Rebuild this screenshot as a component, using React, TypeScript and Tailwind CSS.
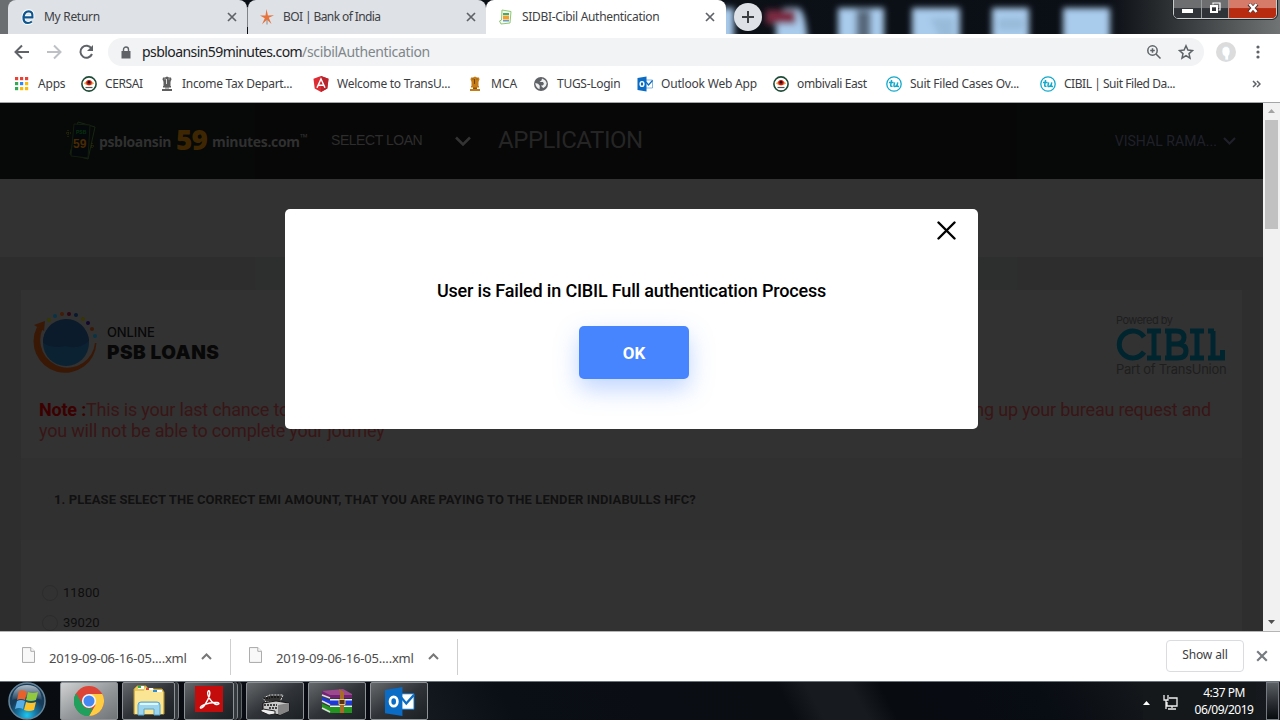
import React from "react";

const ui = "font-['Noto_Sans',sans-serif]";

function Emblem({ color, dark }: { color: string; dark: string }) {
  return (
    <svg width="16" height="16" viewBox="0 0 16 16">
      <path d="M4 1.5h2l2-1 2 1h2l.5 2-1 2h-7l-1-2z" fill={color} />
      <path d="M4.5 5h7v5h-7zM4 10h8v1.5H4zM3 13h10v2H3zM6 11h4v3H6z" fill={color} />
      <path d="M5.5 3h1M9.5 3h1M7.5 3v5M6 12.2h4" stroke={dark} strokeWidth="1" />
    </svg>
  );
}

function Eye() {
  return (
    <svg width="16" height="16" viewBox="0 0 16 16">
      <circle cx="8" cy="8" r="7.1" fill="#fff" stroke="#1d4a35" strokeWidth="1.6" />
      <path d="M2.8 7.2Q8 1.8 13.2 7.2 8 12 2.8 7.2z" fill="#f3a04a" />
      <circle cx="8" cy="6.6" r="2.7" fill="#c91818" />
      <circle cx="8" cy="6.2" r="1.2" fill="#111" />
      <path d="M4.5 11.5h7" stroke="#555" strokeWidth="1.2" />
    </svg>
  );
}

function Tu() {
  return (
    <svg width="16" height="16" viewBox="0 0 16 16" fill="none" stroke="#13a9cb">
      <circle cx="8" cy="8" r="7.2" strokeWidth="1.3" />
      <path d="M3 6.5h4.5M5.6 4 4.7 9.2q-.2 1.6 1.8 1M8.6 6.3l-.6 3q-.2 1.6 1.2 1.2 1.2-.3 1.9-1.6M11.7 6.3l-.6 3.2q0 1.3 1.9.7" strokeWidth="1.5" />
    </svg>
  );
}

function Angular() {
  return (
    <svg width="16" height="16" viewBox="0 0 16 16">
      <path d="M8 0l7.5 2.7-1.2 9.8L8 16l-6.3-3.5L.5 2.7z" fill="#dd2c33" />
      <path d="M8 0l7.5 2.7-1.2 9.8L8 16z" fill="#b8252d" />
      <path d="M4 11.7L8 3l4 8.7M5.5 9.3h5" stroke="#fff" strokeWidth="1.5" fill="none" />
    </svg>
  );
}

function GlobeIcon() {
  return (
    <svg width="16" height="16" viewBox="0 0 16 16">
      <circle cx="8" cy="8" r="7" fill="#5f6368" />
      <path d="M2.300 7l2.700.8 1.800 2-.3 3.400Q2.500 11.500 2.300 7zM9 2.500l-.5 2-2 1.500h3.500l1 2-1.500 1.500H8l1 1.500 1.500 1q3-1.500 3.200-4.500-.4-3.500-4.700-5z" fill="#fff" opacity=".9" />
    </svg>
  );
}

function Outlook({ size }: { size: number }) {
  return (
    <svg width={size} height={size} viewBox="0 0 32 32">
      <path d="M17 8h14v16H17z" fill="#fff" stroke="#0a6cc4" strokeWidth="1" />
      <path d="M18 12l5 6 8-9" fill="none" stroke="#0a6cc4" strokeWidth="2.4" />
      <path d="M1 4l18-3v30L1 28z" fill="#0a6cc4" />
      <ellipse cx="10" cy="16" rx="3.8" ry="4.8" fill="none" stroke="#fff" strokeWidth="2.8" />
    </svg>
  );
}

function AppsGrid() {
  const c = ["#ea4335", "#ea4335", "#ea4335", "#34a853", "#2b8af7", "#fbbc05", "#34a853", "#fbbc05", "#fbbc05"];
  return (
    <svg width="16" height="16" viewBox="0 0 16 16">
      {c.map((f, i) => (
        <rect key={i} x={1 + (i % 3) * 5} y={1 + Math.floor(i / 3) * 5} width="3.2" height="3.2" fill={f} />
      ))}
    </svg>
  );
}

function Cross({ size = 10, color = "#5f6368", w = 1.7 }: { size?: number; color?: string; w?: number }) {
  return (
    <svg width={size} height={size} viewBox="0 0 10 10" className="shrink-0">
      <path d="M1 1l8 8M9 1l-8 8" stroke={color} strokeWidth={w} />
    </svg>
  );
}

function Bookmark({ icon, label, className }: { icon: React.ReactNode; label: string; className: string }) {
  return (
    <div className={"flex shrink-0 items-center " + className}>
      <div className="w-4 shrink-0">{icon}</div>
      <span className="whitespace-nowrap">{label}</span>
    </div>
  );
}

function TabStrip() {
  return (
    <div className="relative flex h-[34px] shrink-0 bg-[#090d14] text-[12px] text-[#3c4043]">
      <svg className="absolute inset-0" width="1280" height="34">
        <defs>
          <linearGradient id="glass" x1="0" x2="1">
            <stop offset="0" stopColor="#0c1118" />
            <stop offset=".7" stopColor="#0a0e15" />
            <stop offset=".78" stopColor="#23272a" />
            <stop offset="1" stopColor="#707474" />
          </linearGradient>
          <filter id="soft" x="-20%" width="140%" y="-40%" height="180%"><feGaussianBlur stdDeviation="3.2" /></filter>
        </defs>
        <rect width="1280" height="34" fill="#0a0e15" />
        <rect width="30" height="34" fill="#6b6e70" />
        <rect x="700" width="580" height="34" fill="url(#glass)" />
        <g filter="url(#soft)" fill="#a9cbec">
          <rect x="720" y="8" width="14" height="40" />
          <path d="M776 48V24h8V8h14q8 2 10 40z" />
          <rect x="838" y="8" width="46" height="40" />
          <rect x="856" y="10" width="15" height="40" fill="#56687a" />
          <rect x="912" y="8" width="48" height="40" />
          <rect x="992" y="8" width="37" height="40" />
          <rect x="1063" y="8" width="47" height="40" />
          <path d="M930 18h24v20h-14zM998 18h26v12h-26z" fill="#8eb0cf" opacity=".6" />
          <rect x="766" y="10" width="30" height="14" fill="#7b2942" />
        </g>
      </svg>
      <div className="relative ml-2 flex h-full w-[239px] items-center rounded-t-lg bg-[#dee1e6] pl-3 pr-2.5">
        <svg width="16" height="16" viewBox="0 0 16 16" fill="none">
          <path d="M3.300 8.300h9.100q.7-6-3.700-6-4.500 0-5.200 5.700-.4 6 4.500 6 2 0 3.900-1.500" stroke="#fff" strokeWidth="4" />
          <path d="M3.300 8.300h9.100q.7-6-3.700-6-4.500 0-5.200 5.700-.4 6 4.500 6 2 0 3.900-1.500" stroke="#0e568f" strokeWidth="2.200" />
        </svg>
        <span className="ml-2 flex-1 tracking-[-0.3px]">My Return</span>
        <Cross />
      </div>
      <div className="relative z-10 mt-[7px] h-5 w-px bg-[#808488]" />
      <div className="relative flex h-full w-[238px] items-center rounded-t-lg bg-[#dee1e6] pl-[11px] pr-2.5">
        <svg width="16" height="16" viewBox="0 0 16 16" fill="#e5733b">
          <path d="M7.500 0l1.400 6.500L15 6.200 9.800 8.800 12.500 15 8 10.800 3 15.300 5.800 9.200 1 6.400l5.500.2z" />
          <path d="M8 11v4.500" stroke="#777" strokeWidth=".8" />
        </svg>
        <span className="ml-2 flex-1 tracking-[-0.6px]">BOI | Bank of India</span>
        <Cross />
      </div>
      <div className="relative flex h-full w-60 items-center rounded-t-lg bg-white pl-3 pr-[11px]">
        <svg width="16" height="16" viewBox="0 0 16 16" fill="none">
          <path d="M4 1l9 1.500-1 11.500-9 1L1.500 12l2-1z" fill="#f7fbf2" stroke="#8cc873" />
          <path d="M5 4h6v2H5z" fill="#42ac69" /><path d="M5 6.500h6v4H5z" fill="#f0a030" /><path d="M5 11h6v1.500H5z" fill="#6a9acb" />
        </svg>
        <span className="ml-2 flex-1 whitespace-nowrap tracking-[-0.32px]">SIDBI-Cibil Authentication</span>
        <Cross />
      </div>
      <div className="relative ml-2 mt-[3px] flex h-7 w-7 items-center justify-center rounded-full bg-[#dee1e6]">
        <svg width="12" height="12" viewBox="0 0 12 12"><path d="M6 0v12M0 6h12" stroke="#3c4043" strokeWidth="2" /></svg>
      </div>
      <div className="absolute right-[3px] top-[-4px] flex h-[23px] w-[104px] overflow-hidden rounded-b-[5px] border border-[#c9cbcc] outline outline-[#25282b]">
        <div className="flex w-7 items-end justify-center border-r border-[#9a9da0] bg-linear-to-b from-[#6c6e70] from-50% to-[#303337] to-55% pb-[5px]">
          <div className="h-[4px] w-[11px] bg-white" />
        </div>
        <div className="flex w-[27px] items-end justify-center border-r border-[#9a9da0] bg-linear-to-b from-[#6c6e70] from-50% to-[#303337] to-55% pb-1">
          <svg width="12" height="12" viewBox="0 0 12 12" fill="none"><path d="M4 2.500V1h7v7H9.500" stroke="#fff" strokeWidth="1.200" /><path d="M2 4h6v6H2z" stroke="#fff" strokeWidth="2" /></svg>
        </div>
        <div className="flex flex-1 items-end justify-center bg-linear-to-b from-[#d67b6a] from-50% to-[#b92b10] to-55% pb-[5px]">
          <svg width="12" height="10" viewBox="0 0 12 10"><path d="M2 1l8 8M10 1L2 9" stroke="#533" strokeWidth="4" /><path d="M2.500 1l7 8M9.500 1l-7 8" stroke="#fff" strokeWidth="2.500" /></svg>
        </div>
      </div>
    </div>
  );
}

function Toolbar() {
  return (
    <div className="flex h-9 shrink-0 items-center bg-white">
      <svg className="ml-3.5" width="84" height="20" viewBox="0 0 84 20" fill="none" stroke="#5f6368" strokeWidth="2">
        <path d="M15 10H2M8 3.500L1.500 10 8 16.500" />
        <path d="M33 10h13M40 3.500L46.500 10 40 16.500" stroke="#bdc1c6" />
        <path d="M77.500 6.500A6 6 0 1 0 78 12" />
        <path d="M79 3v6h-6z" fill="#5f6368" stroke="none" />
      </svg>
      <div className="ml-2.5 flex h-7 w-[1096px] items-center rounded-full bg-[#f1f3f4] pl-[13px] text-[14px]">
        <svg width="10" height="13" viewBox="0 0 10 13"><path d="M.5 5h9v7.500h-9z" fill="#5f6368" /><path d="M2.500 5V3.500a2.500 2.500 0 0 1 5 0V5" fill="none" stroke="#5f6368" strokeWidth="1.400" /></svg>
        <span className="-mt-px ml-[11px] flex-1 text-[#202124] tracking-[-0.57px]">psbloansin59minutes.com<span className="text-[#80868b] tracking-[-0.34px]">/scibilAuthentication</span></span>
        <svg width="16" height="16" viewBox="0 0 16 16" fill="none" stroke="#5f6368" strokeWidth="1.500"><circle cx="6.500" cy="6.500" r="4.700" /><path d="M10 10l4.500 4.500M4.200 6.500h4.600M6.500 4.200v4.600" /></svg>
        <svg className="ml-4 mr-2.5" width="16" height="16" viewBox="0 0 16 16" fill="none" stroke="#5f6368" strokeWidth="1.500"><path d="M8 1.800l1.900 4.300 4.600.4-3.500 3.100 1 4.600-4-2.500-4 2.500 1-4.600-3.500-3.100 4.600-.4z" /></svg>
      </div>
      <svg className="ml-3" width="20" height="20" viewBox="0 0 20 20"><circle cx="10" cy="10" r="10" fill="#dcdcdc" /><path d="M10 4.500c3 0 4 2.500 4 5 0 3-1 3.500-1.500 4.500v4H9v-3.500c-2-1-3-2.500-3-5s1-5 4-5z" fill="#fff" stroke="#cfe0ec" strokeWidth=".7" /></svg>
      <svg className="ml-5" width="4" height="14" viewBox="0 0 4 14" fill="#5f6368"><circle cx="2" cy="2" r="1.600" /><circle cx="2" cy="7" r="1.600" /><circle cx="2" cy="12" r="1.600" /></svg>
    </div>
  );
}

function Bookmarks() {
  return (
    <div className="flex h-[33px] shrink-0 items-center border-b border-[#a3a5a7] bg-white pb-1 pl-3.5 text-[12px] text-[#3c4043]">
      <Bookmark className="w-[67px] gap-2 tracking-[-0.2px]" icon={<AppsGrid />} label="Apps" />
      <Bookmark className="w-[78px] gap-2 tracking-[-0.4px]" icon={<Eye />} label="CERSAI" />
      <Bookmark className="w-[154px] gap-[7px] tracking-[-0.3px]" icon={<Emblem color="#5e5e5e" dark="#ddd" />} label="Income Tax Depart..." />
      <Bookmark className="w-[154px] gap-2 tracking-[-0.27px]" icon={<Angular />} label="Welcome to TransU..." />
      <Bookmark className="w-[66px] gap-2" icon={<Emblem color="#c57c14" dark="#704509" />} label="MCA" />
      <Bookmark className="w-[104px] gap-2 tracking-[-0.28px]" icon={<GlobeIcon />} label="TUGS-Login" />
      <Bookmark className="w-[136px] gap-2 tracking-[-0.2px]" icon={<Outlook size={16} />} label="Outlook Web App" />
      <Bookmark className="w-[113px] gap-2 tracking-[-0.38px]" icon={<Eye />} label="ombivali East" />
      <Bookmark className="w-[154px] gap-2 tracking-[-0.25px]" icon={<Tu />} label="Suit Filed Cases Ov..." />
      <Bookmark className="flex-1 gap-2 tracking-[-0.46px]" icon={<Tu />} label="CIBIL | Suit Filed Da..." />
      <svg className="mr-[19px]" width="9" height="8" viewBox="0 0 9 8" fill="none" stroke="#5f6368" strokeWidth="1.500"><path d="M1 1l3 3-3 3M5 1l3 3-3 3" /></svg>
    </div>
  );
}

function SiteHeader() {
  return (
    <div className="flex h-[76px] shrink-0 items-center bg-[linear-gradient(90deg,#060908_255px,#070707_255px,#070707_1017px,#060908_1017px)] pl-16 font-['Roboto',sans-serif]">
      <svg width="34" height="40" viewBox="0 0 34 40" fill="none">
        <path d="M14 1l17 5-7 32-18-5z" stroke="#172611" /><path d="M10 3l16 1-2 33-17-2z" fill="#05080a" stroke="#131d0e" />
        <path d="M4 9v8M2 12h5M28 22v6M27 25h4" stroke="#303207" strokeDasharray="1 1" />
        <text x="12" y="13" fontSize="5" fontWeight="700" fill="#06330f" fontFamily="Liberation Sans">PSB</text>
        <text x="9" y="27" fontSize="12" fontWeight="700" fill="#4a2a04" fontFamily="Liberation Sans">59</text>
      </svg>
      <div className="ml-[1px] flex items-center whitespace-nowrap font-['Open_Sans',sans-serif] font-bold text-[#303030]">
        <span className="w-[77px] text-[14px] tracking-[-0.35px]">psbloansin</span>
        <span className="-mt-[5px] w-9 text-[28px] font-extrabold leading-9 tracking-[-0.8px] text-[#3f2603]">59</span>
        <span className="w-[88px] text-[14px] tracking-[-0.33px]">minutes.com</span>
        <span className="-mt-2 w-[9px] text-[10px] leading-3">™</span>
      </div>
      <div className="ml-[22px] flex w-[141px] items-center justify-between">
        <span className="-mt-px font-['Liberation_Sans',sans-serif] text-[14px] tracking-[-0.45px] text-[#2d2d2d]">SELECT LOAN</span>
        <svg width="18" height="10" viewBox="0 0 18 10"><path d="M2 1.500l7 7 7-7" fill="none" stroke="#333" strokeWidth="2.500" /></svg>
      </div>
      <span className="ml-[26px] flex-1 -mt-0.5 text-[24px] text-[#252525] tracking-[-0.45px]">APPLICATION</span>
      <span className="text-[14px] tracking-[0.05px] text-[#20202a]">VISHAL RAMA...</span>
      <svg className="ml-1.5 mr-[27px]" width="13" height="8" viewBox="0 0 13 8"><path d="M1 1l5.500 5.500L12 1" fill="none" stroke="#20202a" strokeWidth="2" /></svg>
    </div>
  );
}

function LoansLogo() {
  const dots = [
    [16, 9, "#343900"], [22, 5, "#073347"], [29, 3, "#421b08"], [36, 3, "#2d0715"], [43, 4, "#081830"], [50, 8, "#373600"], [55, 12, "#14072e"], [59, 18, "#3c1907"], [62, 25, "#083345"],
  ] as const;
  return (
    <svg width="66" height="66" viewBox="0 0 66 66">
      <circle cx="33" cy="32" r="23" fill="#0b2233" />
      <path d="M10 32q10 6 23 3 13 4 23-5A23 23 0 0 0 10 32z" fill="#0c1b2b" />
      <path d="M4 16A31.500 31.500 0 1 0 63.500 32L62 32A27.500 27.500 0 1 1 9.500 18z" fill="#3a1806" />
      <path d="M1 14l11-4-1 10z" fill="#3a1806" />
      {dots.map(([x, y, c]) => <circle key={x} cx={x} cy={y} r="2" fill={c} />)}
    </svg>
  );
}

function Radio({ label }: { label: string }) {
  return (
    <div className="flex h-[30px] items-center gap-[5px] pl-[21px] text-[13px] text-[#0e0e0e]">
      <div className="h-4 w-4 rounded-full border border-[#2c2c2c]" />
      <span>{label}</span>
    </div>
  );
}

function SitePage() {
  return (
    <div className="flex h-[528px] shrink-0 overflow-hidden bg-[#2e2e2e] font-['Roboto',sans-serif]">
      <div className="relative flex w-[1263px] flex-col">
        <SiteHeader />
        <div className="h-[78px] shrink-0 bg-[#323232]" />
        <div className="h-[33px] shrink-0 bg-[linear-gradient(90deg,#2d2d2d_255px,#2d2f2f_255px,#2d2f2f_1017px,#2d2d2d_1017px)]" />
        <div className="ml-[21px] flex w-[1221px] flex-1 flex-col bg-[#323232]">
          <div className="flex h-[108px] shrink-0 items-start pl-3 pt-[21px]">
            <LoansLogo />
            <div className="ml-2 mt-[14px] flex flex-1 flex-col text-[#080808]">
              <span className="font-['Inter',sans-serif] text-[13px] font-medium leading-[15px] tracking-[-0.1px]">ONLINE</span>
              <span className="mt-px font-['Inter',sans-serif] text-[19px] font-black leading-6 tracking-[0.5px]">PSB LOANS</span>
            </div>
            <div className="mr-[15px] mt-[3px] flex w-[111px] flex-col font-['Inter',sans-serif] text-[#1e1e1e]">
              <span className="text-[11px] leading-3 tracking-[-0.5px]">Powered by</span>
              <svg className="mt-[2px]" width="110" height="33" viewBox="0 0 110 33" fill="none" stroke="#00252f" strokeWidth="5">
                <path d="M28 9A13.500 13.500 0 1 0 28 24M31 3h14M38 3v27M31 30h14M49 3h11q8 0 8 6.500t-8 6.500h-8 9q9 0 9 7t-9 7h-12M53 3v27M74 3h14M81 3v27M74 30h14M92 3h6M97 3v27M92 30h14.500v-8" />
              </svg>
              <span className="mt-px whitespace-nowrap text-[13px] leading-[15px] tracking-[-0.27px]">Part of TransUnion</span>
            </div>
          </div>
          <div className="flex h-[60px] shrink-0 flex-col pl-[18px] pt-px text-[18px] leading-[21px] tracking-[-0.2px] text-[#391516]">
            <div className="flex justify-between pr-[31px]">
              <span><b className="text-[#3c0000]">Note :</b>This is your last chance to</span>
              <span>ng up your bureau request and</span>
            </div>
            <span>you will not be able to complete your journey</span>
          </div>
          <div className="flex h-[82px] shrink-0 items-center bg-[#303030] pl-[33px] pt-0.5 text-[13px] font-bold tracking-[0.1px] text-[#111]">1. PLEASE SELECT THE CORRECT EMI AMOUNT, THAT YOU ARE PAYING TO THE LENDER INDIABULLS HFC?</div>
          <div className="flex flex-col pt-[38px]">
            <Radio label="11800" />
            <Radio label="39020" />
          </div>
        </div>
        <div className="absolute left-[285px] top-[106px] flex h-[220px] w-[693px] flex-col items-center rounded-[5px] bg-white text-black">
          <svg className="mr-[22px] mt-3 self-end" width="19" height="19" viewBox="0 0 19 19"><path d="M1.500 1.500l16 16M17.500 1.500l-16 16" stroke="#000" strokeWidth="2.400" strokeLinecap="round" /></svg>
          <p className="mt-[38px] text-[18px] font-medium leading-[26px] tracking-[-0.18px]">User is Failed in CIBIL Full authentication Process</p>
          <button className="ml-[5px] mt-[22px] h-[53px] w-[110px] rounded-[5px] bg-[#4785ff] pt-0.5 text-[17px] font-bold text-white shadow-[0_10px_24px_rgba(71,133,255,0.35)]">OK</button>
        </div>
      </div>
      <div className="flex w-[17px] flex-col items-center bg-[#f1f1f1]">
        <svg className="mt-1.5" width="7" height="4" viewBox="0 0 7 4"><path d="M0 4l3.500-4L7 4z" fill="#a3a3a3" /></svg>
        <div className="mt-[7px] h-[109px] w-[13px] bg-[#c1c1c1]" />
        <div className="flex-1" />
        <svg className="mb-[7px]" width="7" height="4" viewBox="0 0 7 4"><path d="M0 0l3.500 4L7 0z" fill="#505050" /></svg>
      </div>
    </div>
  );
}

function Download() {
  return (
    <div className="flex h-9 items-center border-r border-[#cfcfcf]">
      <svg className="-mt-1" width="13" height="16" viewBox="0 0 14 17"><path d="M.5.500h9l4 4v12H.5z" fill="#f8f8f8" stroke="#a2a2a2" /><path d="M9.500.500v4h4" fill="#fff" stroke="#a2a2a2" /></svg>
      <span className="ml-[14px] w-[138px] whitespace-nowrap pt-1 text-[13px] tracking-[-0.2px] text-[#4c4c4c]">2019-09-06-16-05....xml</span>
      <svg className="ml-[14px] mr-[18px]" width="11" height="7" viewBox="0 0 11 7"><path d="M1 6l4.500-4.500L10 6" fill="none" stroke="#777" strokeWidth="2" /></svg>
    </div>
  );
}

function DownloadBar() {
  return (
    <div className="flex h-[50px] shrink-0 items-center border-t border-[#b5b5b5] bg-white">
      <div className="flex flex-1 gap-[18px] pl-[22px]"><Download /><Download /></div>
      <div className="-mt-0.5 flex h-8 w-[78px] items-center justify-center rounded border border-[#dadce0] pb-0.5 text-[12px] tracking-[-0.1px] text-[#3c4043]">Show all</div>
      <div className="-mt-0.5 ml-3 mr-[12px]"><Cross size={12} color="#777b7f" w={1.800} /></div>
    </div>
  );
}

function TaskButton({ children, className }: { children: React.ReactNode; className: string }) {
  return (
    <div className={"flex h-[38px] items-center justify-center rounded-[2px] border border-[#8d9296] " + className}>{children}</div>
  );
}

const dark = "bg-linear-to-br from-[#65696c] via-[#303438] to-[#1b2025]";

function Taskbar() {
  return (
    <div className="flex h-[39px] shrink-0 border-t border-[#69737e] bg-linear-to-r from-[#090c11] via-[#080b12] to-[#16191d] text-white">
      <svg className="ml-2" width="38" height="38" viewBox="0 0 38 38">
        <defs>
          <radialGradient id="start" cy=".9"><stop stopColor="#20c6ef" /><stop offset=".5" stopColor="#1678a5" /><stop offset="1" stopColor="#173c59" /></radialGradient>
          <linearGradient id="gloss" x2="0" y2="1"><stop stopColor="#fff" stopOpacity=".65" /><stop offset="1" stopColor="#fff" stopOpacity=".05" /></linearGradient>
        </defs>
        <circle cx="19" cy="19" r="18" fill="url(#start)" stroke="#66859a" strokeWidth="1.500" />
        <path d="M4 18Q5 3 19 3t15 15Q19 12 4 18z" fill="url(#gloss)" />
        <path d="M11 9q4-2 8 1l-2 8q-4-2-8 0z" fill="#e8602a" /><path d="M20 10q5 2 10 0l-2 8q-5 2-10 0z" fill="#92c83e" />
        <path d="M9 19q4-2 8 0l-2 8q-4-2-8 0z" fill="#5aaee6" /><path d="M18 20q5 2 10 0l-2 8q-5 2-10 0z" fill="#fcc32a" />
      </svg>
      <TaskButton className="ml-3.5 w-[58px] bg-linear-to-br from-[#d0d2d3] via-[#989b9d] to-[#707477]">
        <svg width="30" height="30" viewBox="0 0 30 30"><circle cx="15" cy="15" r="15" fill="#dc4437" /><path d="M2 7.500L9 19l7 11A15 15 0 0 1 2 7.500z" fill="#20a05d" /><path d="M15 8h13.300A15 15 0 0 1 15 30l6.500-11z" fill="#ffcd42" /><path d="M2 7.500L8.500 19A7.500 7.500 0 0 0 15 22.500h4L15 30A15 15 0 0 1 2 7.500z" fill="#20a05d" /><circle cx="15" cy="15" r="7.100" fill="#f4f4f4" /><circle cx="15" cy="15" r="5.500" fill="#4688f1" /></svg>
      </TaskButton>
      <TaskButton className={"ml-1 w-[53px] " + dark}>
        <svg width="34" height="32" viewBox="0 0 34 32"><path d="M2 4l3-3h9l2 3h14l2 3v22H2z" fill="#e8c95d" stroke="#b99a36" /><path d="M6 1h6v3H6z" fill="#fff" /><path d="M6 1h3v2H6z" fill="#27b34c" /><path d="M13 3h8l2 4h8v22H3V6h9z" fill="#f9e594" /><path d="M14 3h7v2h-7z" fill="#fff" /><path d="M14 3h3v2h-3z" fill="#d94535" /><path d="M21 5h9v2h-9z" fill="#fff" /><path d="M21 5h4v2h-4z" fill="#278de1" /><path d="M6 30V20q0-3 3-3h16q3 0 3 3v10h-6v-6H12v6z" fill="#9bd4ed" stroke="#5ba5cc" /><path d="M8 19h18" stroke="#e0f6ff" strokeWidth="2" /></svg>
      </TaskButton>
      <div className="h-[38px] w-1 rounded-r border-r border-[#81868a] bg-[#353a3e]" />
      <TaskButton className={"ml-[5px] w-[50px] " + dark}>
        <svg className="-mt-1" width="28" height="26" viewBox="0 0 28 26"><path d="M0 0h28v26H0z" fill="#c50c0d" /><path d="M5.500 22C4 20 13 16 22 16.500c4 .5 1 3-2 1.500-4-2-8.500-9-7-12.500 1-2 2.500 0 1.500 4C13 14.500 8 23 5.500 22z" fill="none" stroke="#fff" strokeWidth="1.400" /></svg>
      </TaskButton>
      <div className="h-[38px] w-1 rounded-r border-r border-[#81868a] bg-[#353a3e]" />
      <div className="h-[38px] w-1 rounded-r border-r border-[#61666a] bg-[#252a2e]" />
      <TaskButton className={"ml-1 w-[58px] " + dark}>
        <svg className="mt-2" width="32" height="22" viewBox="0 0 32 22">
          <path d="M4 4l7-3h13l-3 7H7z" fill="#333" stroke="#ddd" strokeDasharray="2 1" />
          <path d="M4 9l13-2 13 2v8l-9 4-17-3z" fill="#c9c9c9" stroke="#111" />
          <path d="M19 11l11-2v8l-9 4-2-1z" fill="#858585" />
          <path d="M5 11h13M10 14h8M4 4h7M12 3h9" stroke="#111" strokeWidth="1.500" strokeDasharray="2 1" />
          <path d="M1 17l3-2 12 2v3l-6 1z" fill="#eee" stroke="#222" />
        </svg>
      </TaskButton>
      <TaskButton className={"ml-1 w-[58px] " + dark}>
        <svg width="32" height="26" viewBox="0 0 32 26"><path d="M1 3l21-2 9 5v4H9z" fill="#9c4a8e" /><path d="M1 3l8 4h22v3H9L1 7z" fill="#722373" /><path d="M9 11h22v2H9z" fill="#eee" /><path d="M1 9l8 3.500h22V17H9l-8-4z" fill="#1b39dc" /><path d="M9 17.500h22v1.500H9z" fill="#eee" /><path d="M1 15.500l8 3.500h22v6H9l-8-4z" fill="#239420" /><path d="M1 7l8 3M1 13l8 4M1 20l8 4" stroke="#ddd" strokeWidth="1.500" /><path d="M18 1l5 3v21h-4V5z" fill="#a76c28" /><path d="M18 11.500h6v5h-6z" fill="#583312" stroke="#e7c277" /></svg>
      </TaskButton>
      <TaskButton className={"ml-1 w-[58px] " + dark}><Outlook size={31} /></TaskButton>
      <div className="flex-1 bg-[linear-gradient(62deg,#14191f_0%,#0a0e15_12%,#0a0e13_50%,#171b20_54%,#171b20_60%,#080c11_64%,#080c13_85%,#14181b_100%)]" />
      <div className="flex items-center bg-[#14181b]">
        <svg className="mt-1" width="7" height="4" viewBox="0 0 7 4"><path d="M0 4l3.500-4L7 4z" fill="#fff" /></svg>
        <svg className="ml-[13px] mt-0.5" width="15" height="15" viewBox="0 0 15 15" fill="none" stroke="#eee" strokeWidth="1.300"><path d="M6 3h8v8H4V7M9 11v2M5 14h8M1 0v5h4V0M3 5v9" /></svg>
        <div className="ml-[14px] flex w-[64px] flex-col items-center whitespace-nowrap text-[12px] leading-[17px] tracking-[-0.5px]"><span>4:37 PM</span><span>06/09/2019</span></div>
      </div>
      <div className="ml-[10px] mr-px h-[38px] w-[13px] border border-[#747a80] bg-linear-to-b from-[#5b6065] to-[#080b0e]" />
    </div>
  );
}

export default function App() {
  return (
    <div className={"flex h-[720px] w-[1280px] flex-col overflow-hidden bg-white " + ui}>
      <TabStrip />
      <Toolbar />
      <Bookmarks />
      <SitePage />
      <DownloadBar />
      <Taskbar />
    </div>
  );
}
